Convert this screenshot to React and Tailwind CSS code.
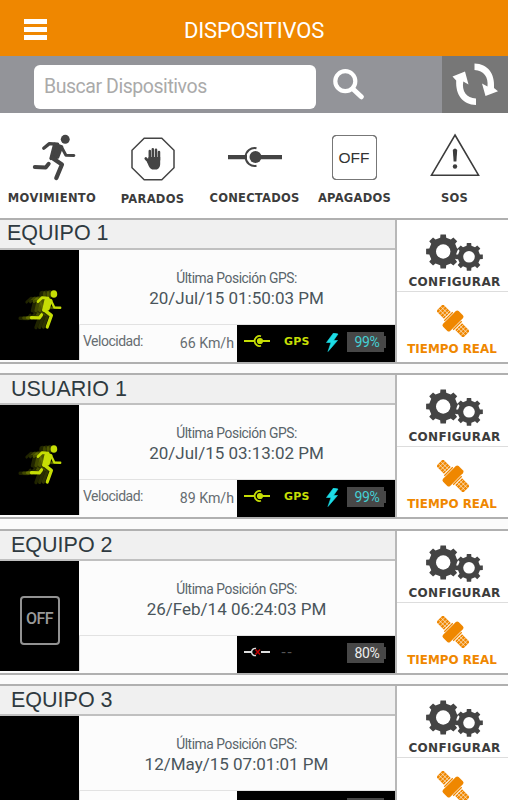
const devices = [
  { id: 1, name: 'EQUIPO 1', date: '20/Jul/15 01:50:03 PM', speed: '66 Km/h', state: 'moving', battery: '99%' },
  { id: 2, name: 'USUARIO 1', date: '20/Jul/15 03:13:02 PM', speed: '89 Km/h', state: 'moving', battery: '99%' },
  { id: 3, name: 'EQUIPO 2', date: '26/Feb/14 06:24:03 PM', speed: '', state: 'off', battery: '80%' },
  { id: 4, name: 'EQUIPO 3', date: '12/May/15 07:01:01 PM', speed: '', state: 'none', battery: '' }
];

const RunnerShape = () => (
  <g stroke="currentColor" fill="none" strokeLinecap="round" strokeLinejoin="round">
    <circle cx="195" cy="76" r="13.5" fill="currentColor" stroke="none" />
    <path d="M130 103 L147 89 L172 91" strokeWidth="10" />
    <path d="M184 100 L197 124 L221 125" strokeWidth="9" />
    <path d="M163 91 L184 99 L172 130 L152 134 Z" fill="currentColor" strokeWidth="10" />
    <path d="M155 132 L185 152 L168 193" strokeWidth="13" />
    <path d="M103 160 L136 161 L145 150" strokeWidth="12" />
  </g>
);

const GhostRunner = () => (
  <svg viewBox="45 58 187 146" className="h-[41px] w-[46px] text-[#c6de05]" preserveAspectRatio="none">
    <g transform="translate(-46 2)" opacity="0.16"><RunnerShape /></g>
    <g transform="translate(-31 1)" opacity="0.2"><RunnerShape /></g>
    <g transform="translate(-16 0)" opacity="0.24"><RunnerShape /></g>
    <RunnerShape />
  </svg>
);

const gearPath = (cx, cy, r, R, teeth) => {
  const pts = [];
  for (let i = 0; i < teeth; i++) {
    const a = (i * 2 * Math.PI) / teeth - Math.PI / 2;
    const step = Math.PI / teeth;
    [[-0.55, r], [-0.4, R], [0.4, R], [0.55, r]].forEach(([k, rad]) => {
      pts.push(`${(cx + rad * Math.cos(a + k * step)).toFixed(2)} ${(cy + rad * Math.sin(a + k * step)).toFixed(2)}`);
    });
  }
  return `M${pts.join(' L')} Z`;
};

const Gears = () => (
  <svg viewBox="0 0 57 37" className="h-[37px] w-[57px]">
    <path d={gearPath(17.2, 17.5, 14.2, 17.3, 8)} fill="#444" />
    <circle cx="17.2" cy="17.5" r="7.2" fill="#fff" />
    <circle cx="43" cy="22.8" r="13" fill="#fff" />
    <path d={gearPath(43, 22.8, 11.2, 14, 8)} fill="#444" />
    <circle cx="43" cy="22.8" r="5.8" fill="#fff" />
  </svg>
);

const Satellite = () => (
  <svg viewBox="0 0 32 32" className="h-[32px] w-[32px]">
    <g transform="translate(16 16) rotate(45)" fill="#ef8700">
      <rect x="-19" y="-4.8" width="11" height="9.6" />
      <rect x="8" y="-4.8" width="11" height="9.6" />
      <path d="M-16 -4.8V4.8M-13 -4.8V4.8M-10 -4.8V4.8M10 -4.8V4.8M13 -4.8V4.8M16 -4.8V4.8M-19 -1.6H-7M-19 1.6H-7M7 -1.6H19M7 1.6H19" stroke="#fff" strokeWidth="0.6" />
      <rect x="-5" y="-11" width="10" height="22" rx="2" />
      <path d="M-6.3 -6V6M6.3 -6V6" stroke="#ef8700" strokeWidth="1.3" />
    </g>
  </svg>
);

const SmallPlug = ({ on }) => (
  <svg viewBox="0 0 26 14" className="h-[14px] w-[26px]" fill="none">
    {on ? (
      <g stroke="#c6de05">
        <path d="M0 7H10M16 7H26" strokeWidth="2.2" />
        <path d="M17 2.2A5 5 0 1 0 17 11.8" strokeWidth="1.7" />
        <circle cx="16" cy="7" r="3.1" fill="#c6de05" stroke="none" />
      </g>
    ) : (
      <g>
        <path d="M0 7H8M17 7H26" stroke="#ddd" strokeWidth="2" />
        <path d="M12 3.5A3.6 3.6 0 1 0 12 10.5" stroke="#ddd" strokeWidth="1.4" />
        <path d="M11.5 4.5L16 9.5M16 4.5L11.5 9.5" stroke="#c40000" strokeWidth="1.5" />
      </g>
    )}
  </svg>
);

const filters = [
  {
    label: 'MOVIMIENTO',
    box: 'w-[104px] pt-[21px]',
    text: 'mt-[9px] tracking-[0.35px]',
    icon: (
      <svg viewBox="95 60 135 142" className="ml-[4px] h-[47px] w-[45px] text-[#444]"><RunnerShape /></svg>
    )
  },
  {
    label: 'PARADOS',
    box: 'w-[97px] pt-[24px]',
    text: 'mt-[10px] tracking-[0.3px]',
    icon: (
      <svg viewBox="0 0 44 44" className="h-[44px] w-[44px]">
        <path d="M13.2 1.2H30.8L43 13.3V30.7L30.8 42.8H13.2L1 30.7V13.3Z" fill="none" stroke="#444" strokeWidth="1.5" />
        <g stroke="#444" strokeLinecap="round" fill="none">
          <path d="M18.8 23V14M21.8 22V12.3M25 22V12.8M28 23V15" strokeWidth="2.5" />
          <path d="M14.8 21.5L19 26" strokeWidth="2.7" />
        </g>
        <path d="M17.6 20H29.2V26.5C29.2 30 27.5 32.5 25 32.5H22C19.5 32.5 18 30 16.2 25.5Z" fill="#444" />
      </svg>
    )
  },
  {
    label: 'CONECTADOS',
    box: 'w-[107px] pt-[32px]',
    text: 'mt-[21px] tracking-[0.25px]',
    icon: (
      <svg viewBox="0 0 54 24" className="h-[24px] w-[54px]" fill="none" stroke="#444">
        <path d="M0 12.2H19M32 12.2H54" strokeWidth="4.2" />
        <path d="M28.5 3.2A9 9 0 1 0 28.5 20.8" strokeWidth="2" />
        <circle cx="27.5" cy="12" r="6" fill="#444" stroke="none" />
      </svg>
    )
  },
  {
    label: 'APAGADOS',
    box: 'w-[93px] pt-[22px]',
    text: 'mt-[10px] tracking-[0.25px]',
    icon: (
      <div className="flex h-[45px] w-[45px] items-center justify-center rounded-[4px] border-[1.5px] border-[#444] pr-px font-['Liberation_Sans'] text-[15.5px] text-[#333] outline outline-[0.5px] -outline-offset-1 outline-[#777]">OFF</div>
    )
  },
  {
    label: 'SOS',
    box: 'w-[107px] pt-[20px]',
    text: 'mt-[12px] tracking-[0.3px]',
    icon: (
      <svg viewBox="0 0 50 45" className="h-[45px] w-[50px]">
        <path d="M25 2L48.5 42.2H1.5Z" fill="none" stroke="#3c3c3c" strokeWidth="1.6" />
        <path d="M22.8 17Q25 14 27.2 17L26.4 28.5H23.6Z" fill="#3c3c3c" />
        <circle cx="25" cy="33.5" r="2.2" fill="#3c3c3c" />
      </svg>
    )
  }
];

const DeviceCard = ({ device }) => {
  const moving = device.state === 'moving';
  return (
    <div className="h-[155.3px] shrink-0">
      <div className="flex h-[146px] border-y-2 border-[#b0b0b0] bg-[#fcfcfc]">
        <div className="flex w-[395px] flex-col">
          <h2
            className={`h-[30px] border-b-2 border-[#c0c0c0] bg-[#f0f0f0] font-['Liberation_Sans',sans-serif] text-[21.5px] text-[#2f3a40] ${
              device.id === 1 ? 'pl-[7px] leading-[27px]' : 'pl-[11px] leading-[29px]'
            }`}
          >
            {device.name}
          </h2>
          <div className="flex flex-1">
            <div className="flex h-[110px] w-[79px] items-center justify-center bg-black pt-[9px]">
              {moving && <GhostRunner />}
              {device.state === 'off' && (
                <div className="flex h-[49px] w-[40px] items-center justify-center rounded-[4px] border-2 border-[#929292] pb-[2px] font-['Roboto'] text-[16px] font-medium tracking-[-0.6px] text-[#999]">OFF</div>
              )}
            </div>
            <div className="flex flex-1 flex-col">
              <div className="h-[75px] border-b border-[#e2e2e2] pr-px pt-[18px] text-center text-[#59646a]">
                <p className="text-[13.8px] leading-[20px] tracking-[-0.43px]">Última Posición GPS:</p>
                <p className="text-[17px] leading-[20px] text-[#4a555b]">{device.date}</p>
              </div>
              <div className="flex flex-1">
                <div className="flex h-[35px] w-[158px] justify-between border-l border-[#ddd] pl-[3px] pr-[3px] text-[#666d71]">
                  <span className="pt-[6px] text-[14px] leading-[20px] tracking-[-0.5px]">{moving && 'Velocidad:'}</span>
                  <span className="pt-[8px] text-[14.2px] leading-[20px]">{device.speed}</span>
                </div>
                <div className="flex flex-1 bg-black">
                  <div className="w-[41px] pl-[7px] pt-[9px]"><SmallPlug on={moving} /></div>
                  <div className="w-[48px] pl-[6px] pt-[9px] font-['DejaVu_Sans'] text-[11px] font-bold leading-[15px] tracking-[0.2px] text-[#c6de05]">
                    {moving && 'GPS'}
                    {device.state === 'off' && <span className="-ml-[3px] text-[14px] font-normal tracking-[1px] text-[#555]">--</span>}
                  </div>
                  <div className="w-[21px] pt-[8px]">
                    {moving && (
                      <svg viewBox="0 0 13 19" className="h-[19px] w-[13px]">
                        <path d="M7.5 0L0.5 9.5H5L2 18.5L11.5 7.5H7.5L12 1Z" fill="#1cdce6" stroke="#1cdce6" strokeWidth="0.6" />
                      </svg>
                    )}
                  </div>
                  <div className="flex pt-[7px]">
                    <div className={`h-[20px] w-[37px] bg-[#474747] pl-[3px] text-center text-[14px] leading-[21px] tracking-[-0.3px] ${moving ? 'text-[#45d0d4]' : 'text-[#eee]'}`}>
                      {device.battery}
                    </div>
                    <div className="mt-[4px] h-[12px] w-[2px] bg-[#474747]" />
                  </div>
                </div>
              </div>
            </div>
          </div>
        </div>
        <div className="flex flex-1 flex-col border-l-2 border-[#b8b8b8] bg-white font-['DejaVu_Sans'] font-bold">
          <button className="flex h-[72px] flex-col items-center border-b border-[#ddd] pt-[14px]">
            <span className="ml-[4px] block h-[37px]"><Gears /></span>
            <span className="ml-[4px] mt-[4px] whitespace-nowrap text-[12px] leading-[14px] tracking-[0.3px] text-[#3c3c3c]">CONFIGURAR</span>
          </button>
          <button className="flex flex-1 flex-col items-center pt-[13px]">
            <Satellite />
            <span className="mt-[5px] whitespace-nowrap pr-px text-[11.9px] leading-[14px] text-[#ef8700]">TIEMPO REAL</span>
          </button>
        </div>
      </div>
    </div>
  );
};

const App = () => {
  return (
    <div className="flex h-[800px] w-[508px] flex-col overflow-hidden bg-[#fbfbfb] font-['Roboto',sans-serif]">
      <header className="flex h-[56px] shrink-0 items-center bg-[#ef8700]">
        <button className="ml-[24px] mt-[3px] flex flex-col gap-[3px]" aria-label="Menu">
          <span className="h-[5px] w-[23px] bg-white" />
          <span className="h-[5px] w-[23px] bg-white" />
          <span className="h-[5px] w-[23px] bg-white" />
        </button>
        <h1 className="ml-[137px] mt-[6px] text-[22px] leading-[28px] tracking-[-0.2px] text-white">DISPOSITIVOS</h1>
      </header>

      {/* Search bar */}
      <div className="flex h-[57px] shrink-0 bg-[#939499]">
        <div className="ml-[34px] mt-[9px] h-[44px] w-[282px] rounded-[6px] bg-white pl-[10px] text-[19.5px] leading-[44px] tracking-[-0.45px] text-[#aaa]">Buscar Dispositivos</div>
        <svg viewBox="0 0 32 32" className="ml-[16px] mt-[12px] h-[32px] w-[32px]" fill="none" stroke="#fff">
          <circle cx="13.3" cy="13.2" r="10" strokeWidth="4.2" />
          <path d="M21 21L29.3 28.8" strokeWidth="5" strokeLinecap="round" />
        </svg>
        <button className="ml-auto w-[66px] bg-[#777]" aria-label="Actualizar">
          <svg viewBox="0 0 66 57" className="h-[57px] w-[66px]" fill="#fff">
            <path d="M32.5 7.5C46 8 53 17.5 52 32L56 35.2L43.5 40L40 27.5L45.5 30.5C46.5 21 42 14.5 32.5 14Z" />
            <path d="M34 49C20.5 48.5 13.5 39 14.2 24.5L10.5 20.5L23 15.5L26.5 28.5L21.3 25.5C19.5 35 24.5 42 34 42.5Z" />
          </svg>
        </button>
      </div>

      <nav className="flex h-[105px] shrink-0 bg-white">
        {filters.map((filter) => (
          <div key={filter.label} className={`flex shrink-0 flex-col items-center ${filter.box}`}>
            {filter.icon}
            <span className={`whitespace-nowrap font-['DejaVu_Sans'] text-[11.5px] font-bold leading-[16px] text-[#3c3c3c] ${filter.text}`}>{filter.label}</span>
          </div>
        ))}
      </nav>

      {devices.map((device) => (
        <DeviceCard key={device.id} device={device} />
      ))}
    </div>
  );
};

export default App;
